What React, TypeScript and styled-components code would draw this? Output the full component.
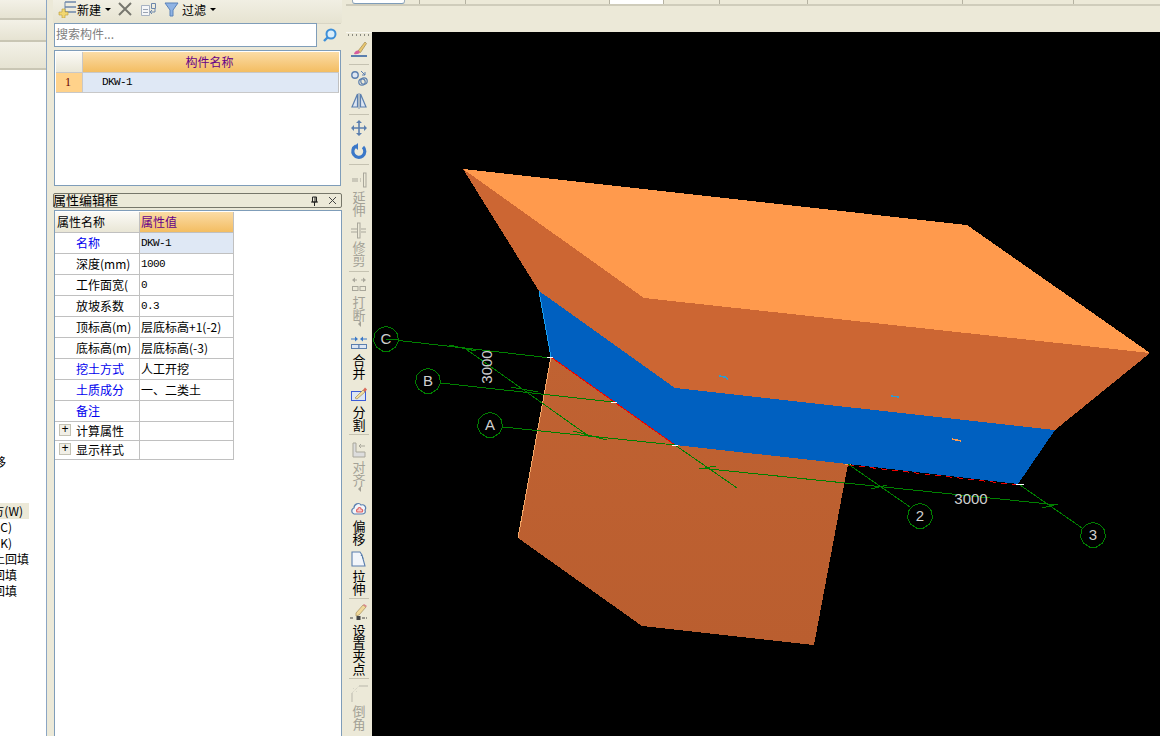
import { FC, ReactNode } from "react";
import styled, { createGlobalStyle } from "styled-components";

const CJK = `"Noto Sans CJK SC", "Liberation Sans", sans-serif`;
const MONO = `"Liberation Mono", "Noto Sans CJK SC", monospace`;

const GlobalStyle = createGlobalStyle`
  html, body { margin: 0; padding: 0; background: #ece9d8; overflow: hidden; }
  * { box-sizing: border-box; }
`;

const Page = styled.div`
  width: 1160px;
  height: 736px;
  display: flex;
  overflow: hidden;
  background: #ece9d8;
  font-family: ${CJK};
  font-size: 12px;
  color: #000;
`;

/* left tree, mostly cut off */
const TreeColumn = styled.div`
  width: 47px;
  flex: none;
  display: flex;
  flex-direction: column;
  border-right: 1px solid #8ba6c4;
`;

const TreeTab = styled.div<{ $h: number }>`
  height: ${(p) => p.$h}px;
  flex: none;
  background: linear-gradient(#f3f1e7, #e6e3d2);
  border-bottom: 2px solid #c9c6b4;
`;

const TreeBody = styled.div`
  flex: 1;
  background: #fff;
  padding-top: 384px;
  line-height: 16px;
`;

const TreeRow = styled.div<{ $w: number; $active?: boolean; $gap?: number }>`
  width: ${(p) => p.$w}px;
  height: 16px;
  margin-bottom: ${(p) => p.$gap ?? 0}px;
  padding-right: ${(p) => (p.$active ? 6 : 0)}px;
  display: flex;
  justify-content: flex-end;
  overflow: hidden;
  white-space: nowrap;
  font-size: 12px;
  background: ${(p) => (p.$active ? "#ece9d8" : "transparent")};
`;

const Splitter = styled.div`
  width: 6px;
  flex: none;
`;

/* component list + property panel */
const MiddleColumn = styled.div`
  width: 289px;
  flex: none;
  display: flex;
  flex-direction: column;
`;

const ListToolbar = styled.div`
  height: 23px;
  flex: none;
  display: flex;
  align-items: center;
  padding: 0 0 5px 4px;
  background: linear-gradient(#f1efe3, #e6e3d1);
`;

const BarText = styled.span<{ $left?: number }>`
  margin-left: ${(p) => p.$left ?? 0}px;
  font-size: 12px;
`;

const BarIcon = styled.span<{ $left?: number }>`
  margin-left: ${(p) => p.$left ?? 0}px;
  display: flex;
`;

const Caret = styled.span<{ $left?: number }>`
  margin-left: ${(p) => p.$left ?? 4}px;
  border-top: 3px solid #000;
  border-left: 3px solid transparent;
  border-right: 3px solid transparent;
`;

const SearchRow = styled.div`
  height: 25px;
  flex: none;
  margin-left: 1px;
  display: flex;
  align-items: stretch;
`;

const SearchInput = styled.div`
  width: 263px;
  height: 24px;
  border: 1px solid #7f9db9;
  background: #fff;
  color: #808080;
  font-size: 12px;
  line-height: 20px;
  padding-left: 1px;
`;

const SearchButton = styled.div`
  width: 24px;
  height: 24px;
  display: flex;
  align-items: center;
  justify-content: center;
  border-top: 1px solid #d8d5c4;
`;

const ListFrame = styled.div`
  height: 136px;
  flex: none;
  margin: 2px 1px 0 1px;
  border: 1px solid #7f9db9;
  background: #fff;
  padding: 1px 1px 0 1px;
`;

const GridRow = styled.div<{ $h: number }>`
  height: ${(p) => p.$h}px;
  display: grid;
  grid-template-columns: 26px 257px;
`;

const CornerCell = styled.div`
  background: linear-gradient(#fbfaf6, #e9e6d6);
  border-bottom: 1px solid #c8c8c8;
`;

const HeadCell = styled.div`
  display: flex;
  align-items: center;
  justify-content: center;
  padding: 0 3px 2px 0;
  color: #660088;
  background: linear-gradient(#fbdca6, #f3bd62);
  border-left: 1px solid #c8c8c8;
  border-bottom: 1px solid #c8c8c8;
`;

const IndexCell = styled.div`
  background: #ffd28a;
  color: #660000;
  font-family: "Liberation Serif", serif;
  font-size: 12px;
  line-height: 18px;
  padding-left: 9px;
  border-bottom: 1px solid #c8c8c8;
`;

const NameCell = styled.div`
  background: #dfe8f5;
  font-family: ${MONO};
  font-size: 11px;
  letter-spacing: -0.6px;
  line-height: 19px;
  padding-left: 19px;
  border-left: 1px solid #c8c8c8;
  border-right: 1px solid #c0c0c0;
  border-bottom: 1px solid #c8c8c8;
`;

const DockHeader = styled.div`
  height: 15px;
  flex: none;
  margin-top: 7px;
  display: flex;
  align-items: center;
  border: 1px solid #77776a;
  border-radius: 2px;
  font-size: 13px;
  line-height: 13px;
  background: #ece9d8;
`;

const DockTitle = styled.span`
  flex: 1;
  margin-left: -1px;
  padding-bottom: 2px;
`;

const DockButton = styled.span`
  width: 18px;
  display: flex;
  justify-content: center;
`;

const PropFrame = styled.div`
  flex: 1;
  margin: 2px 0 0 1px;
  border: 1px solid #7f9db9;
  border-bottom: 0;
  background: #fff;
  padding: 1px 0 0 0;
`;

const PropRow = styled.div<{ $h: number }>`
  width: 179px;
  height: ${(p) => p.$h}px;
  display: grid;
  grid-template-columns: 84px 95px;
  grid-template-rows: minmax(0, 1fr);
  border-bottom: 1px solid #c0c0c0;
`;

const PropName = styled.div<{ $blue?: boolean; $head?: boolean }>`
  display: flex;
  align-items: center;
  gap: 4px;
  padding: 0 0 2px ${(p) => (p.$head ? 1 : 20)}px;
  color: ${(p) => (p.$blue ? "#0000ee" : "#000")};
  background: ${(p) => (p.$head ? "linear-gradient(#fbfaf6, #e9e6d6)" : "transparent")};
  border-left: 1px solid ${(p) => (p.$head ? "transparent" : "#fff")};
  white-space: nowrap;
`;

const PropValue = styled.div<{ $mono?: boolean; $selected?: boolean; $head?: boolean }>`
  display: flex;
  align-items: center;
  padding: 0 0 ${(p) => (p.$mono ? 0 : 2)}px 1px;
  white-space: nowrap;
  font-family: ${(p) => (p.$mono ? MONO : CJK)};
  font-size: ${(p) => (p.$mono ? "11px" : "12px")};
  letter-spacing: ${(p) => (p.$mono ? "-0.6px" : "0")};
  color: ${(p) => (p.$head ? "#660088" : "#000")};
  background: ${(p) =>
    p.$head ? "linear-gradient(#fbdca6, #f3bd62)" : p.$selected ? "#dfe8f5" : "#fff"};
  border-left: 1px solid #c0c0c0;
  border-right: 1px solid #c0c0c0;
`;

const Expander = styled.span`
  width: 12px;
  height: 12px;
  margin-left: -17px;
  margin-right: 1px;
  flex: none;
  display: flex;
  align-items: center;
  justify-content: center;
  border: 1px solid #c4c2b4;
  background: #f1efe6;
  font-family: "Liberation Mono", monospace;
  font-size: 12px;
  line-height: 10px;
`;

/* right side */
const RightColumn = styled.div`
  flex: 1;
  min-width: 0;
  display: flex;
  flex-direction: column;
  padding-left: 4px;
`;

const TopStrip = styled.div`
  height: 32px;
  flex: none;
  display: flex;
  align-items: flex-start;
`;

const StripInner = styled.div`
  height: 6px;
  flex: 1;
  display: flex;
  border-bottom: 2px solid #cfccbb;
`;

const StripTab = styled.div`
  width: 53px;
  height: 4px;
  margin-left: 6px;
  background: #fff;
  border: 1px solid #9ab;
  border-top: 0;
  border-bottom: 1px solid #7f9db9;
  border-radius: 0 0 3px 3px;
`;

const StripCell = styled.div<{ $w: number; $white?: boolean }>`
  width: ${(p) => p.$w}px;
  height: 4px;
  flex: none;
  border-right: 1px solid #b5b2a2;
  background: ${(p) => (p.$white ? "#fff" : "transparent")};
`;

const WorkArea = styled.div`
  flex: 1;
  min-height: 0;
  display: flex;
`;

const ToolStrip = styled.div`
  width: 26px;
  flex: none;
  display: flex;
  flex-direction: column;
  align-items: center;
  background: #ece9d8;
  color: #000;
`;

const Grip = styled.div`
  width: 100%;
  height: 6px;
  flex: none;
  padding: 1px 2px;
  background: repeating-linear-gradient(90deg, #8a8a80 0 1px, transparent 1px 4px) 2px 1px / 22px 2px no-repeat;
  border-top: 1px solid #f8f7f0;
`;

const ToolSep = styled.div<{ $top?: number }>`
  width: 20px;
  height: 1px;
  flex: none;
  margin: ${(p) => p.$top ?? 0}px 0 2px;
  background: #c5c2b1;
`;

const Tool = styled.div<{ $h: number; $pad?: number; $off?: boolean }>`
  width: 26px;
  height: ${(p) => p.$h}px;
  padding-top: ${(p) => p.$pad ?? 0}px;
  flex: none;
  display: flex;
  flex-direction: column;
  align-items: center;
  color: ${(p) => (p.$off ? "#a3a196" : "#000")};
`;

const ToolIcon = styled.span`
  height: 21px;
  flex: none;
  display: flex;
  align-items: center;
  justify-content: center;
`;

const ToolChar = styled.span`
  height: 13px;
  flex: none;
  font-size: 13px;
  line-height: 13px;
`;

const ToolArrow = styled.span`
  border-top: 3px solid transparent;
  border-bottom: 3px solid transparent;
  border-right: 3px solid #a3a196;
`;

const Viewport = styled.div`
  flex: 1;
  background: #000;
  min-width: 0;
`;

const ViewSvg = styled.svg`
  display: block;
`;

const GridLabel = styled.text`
  font-family: "Liberation Sans", sans-serif;
  font-size: 15px;
  fill: #cfcfcf;
  text-anchor: middle;
`;

/* icons */
const Ico: FC<{ w?: number; h?: number; children: ReactNode }> = ({ w = 18, h = 18, children }) => (
  <svg width={w} height={h} viewBox={`0 0 ${w} ${h}`} fill="none">
    {children}
  </svg>
);

const BLUE = "#5b7fae";
const GRAY = "#a9a79b";

const icons: Record<string, ReactNode> = {
  brush: (
    <Ico>
      <path d="M1 16h16" stroke={BLUE} strokeWidth="2" />
      <path d="M8 11l7-9 1.5 1.5-6 9z" fill="#e9c66f" stroke="#a08a50" strokeWidth=".7" />
      <path d="M4 14c.5-2.5 2.5-4 4.5-3.5l1.5 2c-1 1.5-3.5 2-6 1.500z" fill="#d85d9c" />
    </Ico>
  ),
  copy: (
    <Ico>
      <circle cx="5" cy="6" r="3.200" stroke={BLUE} strokeWidth="1.400" fill="#dde6f2" />
      <circle cx="12" cy="13" r="3.200" stroke={BLUE} strokeWidth="1.200" />
      <circle cx="14" cy="12" r="3.200" stroke={BLUE} strokeWidth="1.200" />
      <path d="M11 2l4 4m0-3v3h-3" stroke={BLUE} strokeWidth="1" />
    </Ico>
  ),
  mirror: (
    <Ico>
      <path d="M7.500 2L2 15h5.500zM10.500 2L16 15h-5.500z" stroke={BLUE} strokeWidth="1.200" fill="#dde6f2" />
      <path d="M9 1v16" stroke={BLUE} strokeWidth=".8" />
    </Ico>
  ),
  move: (
    <Ico>
      <path d="M9 2v14M2 9h14" stroke={BLUE} strokeWidth="1.600" />
      <path d="M9 1l3 3H6zM9 17l3-3H6zM1 9l3-3v6zM17 9l-3-3v6z" fill={BLUE} />
    </Ico>
  ),
  rotate: (
    <Ico>
      <path d="M6 4a6 6 0 1 0 7 1" stroke="#3b78c8" strokeWidth="3.200" />
      <path d="M8 1v7L4 4.500z" fill="#3b78c8" />
    </Ico>
  ),
  extend: (
    <Ico>
      <path d="M2 8h6M2 10h6" stroke={GRAY} />
      <path d="M10 8h1M10 10h1" stroke={GRAY} />
      <rect x="13.500" y="2" width="2.500" height="14" stroke={GRAY} />
    </Ico>
  ),
  trim: (
    <Ico>
      <path d="M1 8h6M1 11h6M11 8h5M11 11h5" stroke={GRAY} />
      <rect x="7.500" y="2" width="2.500" height="15" stroke={GRAY} />
    </Ico>
  ),
  breakLine: (
    <Ico>
      <path d="M2 4l3-2.500v5zM16 4l-3-2.500v5z" fill={GRAY} />
      <path d="M4 4h3M11 4h3" stroke={GRAY} />
      <rect x="2.500" y="10.500" width="5.500" height="4" stroke={GRAY} />
      <rect x="10" y="10.500" width="5.500" height="4" stroke={GRAY} />
    </Ico>
  ),
  merge: (
    <Ico>
      <path d="M8 5L5 2.500v5zM10 5l3-2.500v5z" fill="#3b78c8" />
      <path d="M1 5h5M12 5h5" stroke="#3b78c8" />
      <rect x="1.500" y="10.500" width="7.500" height="4" stroke={BLUE} fill="#dde6f2" />
      <rect x="9" y="10.500" width="7.500" height="4" stroke={BLUE} fill="#dde6f2" />
    </Ico>
  ),
  split: (
    <Ico>
      <rect x="1.500" y="5.500" width="14" height="9" stroke="#3b5bd8" fill="#dde6f2" />
      <path d="M5 12l8-8 2 2-8 7z" fill="#f1e0a0" stroke="#9a7a45" strokeWidth=".6" />
      <path d="M13 4l2-2.500 2 2-2 2.500z" fill="#d96a5a" />
    </Ico>
  ),
  align: (
    <Ico>
      <path d="M3 2v14h12v-5H6V2z" stroke={GRAY} fill="#ddd" />
      <path d="M15 5H9m2-2L9 5l2 2" stroke={GRAY} />
    </Ico>
  ),
  offset: (
    <Ico>
      <path d="M4 14c-3-1-3-5 0-6 0-4 5-6 7-3 3-1 6 2 4 5 1 3-1 4-3 4z" stroke={BLUE} strokeWidth="1.200" fill="#f2f5fa" />
      <path d="M7 12c-1-2 0-3 1-3 0-2 3-2 3 0 2 0 2 2 1 3z" stroke="#e06060" strokeWidth="1.200" fill="#f6caca" />
    </Ico>
  ),
  stretch: (
    <Ico>
      <path d="M2 2h8l2 3 3 11H2z" stroke={BLUE} strokeWidth="1.100" fill="#f2f5fa" />
      <path d="M11 5l2 3v2" stroke="#2c5a90" strokeDasharray="1 2" />
    </Ico>
  ),
  grip: (
    <Ico>
      <path d="M0 14h4M12 14h5" stroke="#444" strokeDasharray="3 1" />
      <rect x="6.500" y="12" width="4" height="4" fill="#444" />
      <path d="M6 9l7-8 3 2-7 8-3 1z" fill="#f1d99a" stroke="#a68f5c" strokeWidth=".7" />
      <path d="M13 1l3 2 1-1-3-2z" fill="#d9848a" />
    </Ico>
  ),
  chamfer: (
    <Ico>
      <path d="M2 17V8M9 1h9" stroke="#b9b7ab" />
      <path d="M2 8l7-7M3 3l1 1M6 6l1 1" stroke="#cfcdc1" strokeDasharray="1 1" />
    </Ico>
  ),
};

type ToolDef =
  | { sep: true; top?: number }
  | { icon: string; label?: string; h: number; pad?: number; off?: boolean; arrow?: boolean };

const tools: ToolDef[] = [
  { icon: "brush", h: 26 },
  { sep: true },
  { icon: "copy", h: 23 },
  { icon: "mirror", h: 24 },
  { sep: true },
  { icon: "move", h: 23 },
  { icon: "rotate", h: 24 },
  { sep: true },
  { icon: "extend", label: "延伸", h: 52, pad: 2, off: true },
  { icon: "trim", label: "修剪", h: 52, off: true },
  { sep: true },
  { icon: "breakLine", label: "打断", h: 58, off: true, arrow: true },
  { icon: "merge", label: "合并", h: 50 },
  { icon: "split", label: "分割", h: 52, pad: 2 },
  { sep: true },
  { icon: "align", label: "对齐", h: 59, pad: 2, off: true, arrow: true },
  { icon: "offset", label: "偏移", h: 50, pad: 2 },
  { icon: "stretch", label: "拉伸", h: 50, pad: 2 },
  { sep: true, top: 2 },
  { icon: "grip", label: "设置夹点", h: 76, pad: 1 },
  { sep: true, top: 1 },
  { icon: "chamfer", label: "倒角", h: 55, pad: 2, off: true },
];

const props = [
  { name: "名称", value: "DKW-1", blue: true, mono: true, selected: true },
  { name: "深度(mm)", value: "1000", mono: true },
  { name: "工作面宽(", value: "0", mono: true },
  { name: "放坡系数", value: "0.3", mono: true },
  { name: "顶标高(m)", value: "层底标高+1(-2)" },
  { name: "底标高(m)", value: "层底标高(-3)" },
  { name: "挖土方式", value: "人工开挖", blue: true },
  { name: "土质成分", value: "一、二类土", blue: true },
  { name: "备注", value: "", blue: true },
];

const bubblePoints = (cx: number, cy: number, r: number) =>
  Array.from({ length: 11 }, (_, i) => {
    const a = (i / 11) * Math.PI * 2 - Math.PI / 2;
    return `${(cx + r * Math.cos(a)).toFixed(1)},${(cy + r * Math.sin(a)).toFixed(1)}`;
  }).join(" ");

const bubbles = [
  { x: 386, y: 339, t: "C" },
  { x: 428, y: 381, t: "B" },
  { x: 490, y: 425, t: "A" },
  { x: 920, y: 516, t: "2" },
  { x: 1093, y: 535, t: "3" },
];

const greenLines = [
  [386, 339, 551, 358],
  [441, 383, 613, 402],
  [503, 427, 675, 445],
  [675, 445, 737, 488],
  [848, 464, 910, 507],
  [1020, 485, 1082, 528],
  [700, 468, 1058, 505],
  [463, 347, 590, 437],
  [449, 345, 476, 351],
  [511, 387, 538, 392],
  [573, 431, 607, 440],
  [699, 469, 716, 466],
  [871, 489, 887, 485],
  [1042, 508, 1058, 504],
];

const Scene: FC = () => (
  <ViewSvg width="788" height="704" viewBox="372 32 788 704" shapeRendering="crispEdges">
    <defs>
      <linearGradient id="lower" x1="0" y1="0" x2="0" y2="1">
        <stop offset="0" stopColor="#c06232" />
        <stop offset="1" stopColor="#ba5e2f" />
      </linearGradient>
    </defs>
    <polygon points="463,169 967,225 1150,353 644,298" fill="#ff9a4d" />
    <polygon points="463,169 644,298 1150,353 1055,430 675,388 539,291" fill="#cc6633" />
    <polygon points="551,357 675,445 848,464 814,645 642,626 518,538" fill="url(#lower)" />
    <polygon points="539,291 675,388 1055,430 1018,484 848,464 675,445 551,357" fill="#0060c0" />
    <path d="M539 291L551 357" stroke="#19a0f0" />
    <path d="M551 357L518 538" stroke="#f4a868" />
    <path d="M551 357L675 445" stroke="#f00000" />
    <path d="M848 465L1018 485" stroke="#f00000" strokeDasharray="6 5" />
    <path d="M719 376l6 1 3 2" stroke="#2f9bd0" strokeWidth="1.500" />
    <path d="M891 396l8 1" stroke="#2f9bd0" strokeWidth="1.500" />
    <path d="M952 439l9 2" stroke="#ff9a4d" strokeWidth="1.500" />
    <path d="M845 464l6 0" stroke="#ff9a4d" />
    {greenLines.map(([x1, y1, x2, y2]) => (
      <line key={`${x1}-${y1}`} x1={x1} y1={y1} x2={x2} y2={y2} stroke="#008000" strokeWidth="1" />
    ))}
    {bubbles.map((b) => (
      <g key={b.t}>
        <polygon points={bubblePoints(b.x, b.y, 12.5)} fill="#000" stroke="#008000" />
        <GridLabel x={b.x} y={b.y + 5}>
          {b.t}
        </GridLabel>
      </g>
    ))}
    <line x1="386" y1="339" x2="398" y2="340" stroke="#008000" />
    <GridLabel x={971} y={504} fontSize="16">
      3000
    </GridLabel>
    <GridLabel transform="rotate(-90 492 367)" x={492} y={367}>
      3000
    </GridLabel>
    <path d="M547 357h6M611 402h6M672 445h6M1016 484h8" stroke="#fff" />
  </ViewSvg>
);

const App: FC = () => (
  <Page>
    <GlobalStyle />
    <TreeColumn>
      <TreeTab $h={20} />
      <TreeTab $h={22} />
      <TreeTab $h={28} />
      <TreeBody>
        <TreeRow $w={6} $gap={33}>
          偏移
        </TreeRow>
        <TreeRow $w={29} $active>
          土方(W)
        </TreeRow>
        <TreeRow $w={12}>坑(C)</TreeRow>
        <TreeRow $w={12}>槽(K)</TreeRow>
        <TreeRow $w={29}>基土回填</TreeRow>
        <TreeRow $w={17}>槽回填</TreeRow>
        <TreeRow $w={17}>坑回填</TreeRow>
      </TreeBody>
    </TreeColumn>
    <Splitter />
    <MiddleColumn>
      <ListToolbar>
        <BarIcon>
          <Ico w={20} h={18}>
            <path d="M8 2h11M8 7h11M8 12h11" stroke="#6d87ab" strokeWidth="1.400" />
            <path d="M8 2v10" stroke="#6d87ab" />
            <path d="M2 12h3V9h3v3h3v3H8v3H5v-3H2z" fill="#f2d772" stroke="#b89a38" strokeWidth=".6" />
          </Ico>
        </BarIcon>
        <BarText $left={0}>新建</BarText>
        <Caret />
        <BarIcon $left={7}>
          <Ico w={14} h={14}>
            <path d="M1 1l12 12M13 1L1 13" stroke="#77776f" strokeWidth="2" />
          </Ico>
        </BarIcon>
        <BarIcon $left={8}>
          <Ico w={17} h={14}>
            <path d="M1.500 3.500h8v10h-8z" stroke="#a7b2c2" fill="#f5f6f8" />
            <path d="M3 7.500h5M3 10.500h5" stroke="#9aa4b4" />
            <path d="M11.500 1.500h4v5h-4zM15 7v3h-5m2-2l-2 2 2 2" stroke="#6d87ab" />
          </Ico>
        </BarIcon>
        <BarIcon $left={7}>
          <Ico w={15} h={15}>
            <path d="M1 1h13L9 8v6H6V8z" fill="#8fb3e4" stroke="#5b82b8" />
          </Ico>
        </BarIcon>
        <BarText $left={3}>过滤</BarText>
        <Caret />
      </ListToolbar>
      <SearchRow>
        <SearchInput>搜索构件...</SearchInput>
        <SearchButton>
          <Ico w={15} h={15}>
            <circle cx="9" cy="6" r="4.500" stroke="#3d8fd8" strokeWidth="2" fill="#d9eefb" />
            <path d="M6 9l-4 4" stroke="#3d8fd8" strokeWidth="2.400" />
          </Ico>
        </SearchButton>
      </SearchRow>
      <ListFrame>
        <GridRow $h={21}>
          <CornerCell />
          <HeadCell>构件名称</HeadCell>
        </GridRow>
        <GridRow $h={19}>
          <IndexCell>1</IndexCell>
          <NameCell>DKW-1</NameCell>
        </GridRow>
      </ListFrame>
      <DockHeader>
        <DockTitle>属性编辑框</DockTitle>
        <DockButton>
          <Ico w={9} h={10}>
            <path d="M2.500 1h4v5h-4zM1 6h7M4.500 6v4M5 1v5" stroke="#222" />
          </Ico>
        </DockButton>
        <DockButton>
          <Ico w={9} h={9}>
            <path d="M1 1l7 7M8 1L1 8" stroke="#444" />
          </Ico>
        </DockButton>
      </DockHeader>
      <PropFrame>
        <PropRow $h={21}>
          <PropName $head>属性名称</PropName>
          <PropValue $head>属性值</PropValue>
        </PropRow>
        {props.map((p) => (
          <PropRow $h={21} key={p.name}>
            <PropName $blue={p.blue}>{p.name}</PropName>
            <PropValue $mono={p.mono} $selected={p.selected}>
              {p.value}
            </PropValue>
          </PropRow>
        ))}
        {["计算属性", "显示样式"].map((name) => (
          <PropRow $h={19} key={name}>
            <PropName>
              <Expander>+</Expander>
              {name}
            </PropName>
            <PropValue />
          </PropRow>
        ))}
      </PropFrame>
    </MiddleColumn>
    <RightColumn>
      <TopStrip>
        <StripInner>
          <StripTab />
          <StripCell $w={15} />
          <StripCell $w={46} />
          <StripCell $w={144} />
          <StripCell $w={54} $white />
          <StripCell $w={56} />
          <StripCell $w={88} />
          <StripCell $w={155} />
          <StripCell $w={111} />
        </StripInner>
      </TopStrip>
      <WorkArea>
        <ToolStrip>
          <Grip />
          {tools.map((t, i) =>
            "sep" in t ? (
              <ToolSep key={i} $top={t.top} />
            ) : (
              <Tool key={t.icon} $h={t.h} $pad={t.pad} $off={t.off}>
                <ToolIcon>{icons[t.icon]}</ToolIcon>
                {t.label?.split("").map((c) => (
                  <ToolChar key={c}>{c}</ToolChar>
                ))}
                {t.arrow && <ToolArrow />}
              </Tool>
            ),
          )}
        </ToolStrip>
        <Viewport>
          <Scene />
        </Viewport>
      </WorkArea>
    </RightColumn>
  </Page>
);

export default App;
